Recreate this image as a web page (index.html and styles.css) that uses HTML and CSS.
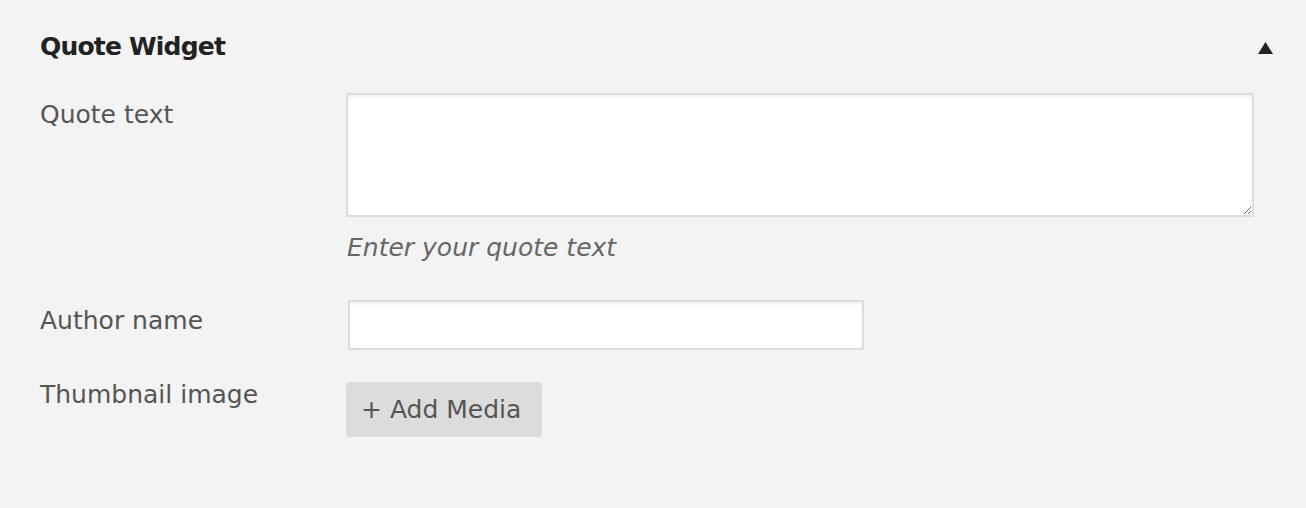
FILE: index.html
```html
<!DOCTYPE html>
<html lang="en">
<head>
<meta charset="utf-8">
<title>Quote Widget</title>
<link rel="stylesheet" href="styles.css">
</head>
<body>
<div class="widget">
  <div class="widget-header">
    <h3 class="widget-title">Quote Widget</h3>
    <svg class="toggle" width="15" height="12" viewBox="0 0 15 12" aria-hidden="true"><polygon points="7.5,0 15,12 0,12" fill="#222"/></svg>
  </div>
  <div class="row row-quote">
    <label class="label label-quote" for="quote">Quote text</label>
    <div class="control">
      <textarea id="quote" class="textarea"></textarea>
      <p class="hint">Enter your quote text</p>
    </div>
  </div>
  <div class="row row-author">
    <label class="label label-author" for="author">Author name</label>
    <div class="control">
      <input id="author" class="text-input" type="text">
    </div>
  </div>
  <div class="row row-thumb">
    <span class="label">Thumbnail image</span>
    <div class="control">
      <button class="media-btn" type="button">+ Add Media</button>
    </div>
  </div>
</div>
</body>
</html>
```
FILE: styles.css
```css
html, body {
  margin: 0;
  padding: 0;
  background: #f3f3f3;
}
body {
  font-family: "DejaVu Sans", "Liberation Sans", sans-serif;
  font-size: 25px;
  line-height: 30px;
  color: #555;
  width: 1306px;
  height: 508px;
  overflow: hidden;
}
.widget {
  padding: 29px 33px 0 40px;
}
.widget-header {
  display: flex;
  align-items: center;
  justify-content: space-between;
  height: 36px;
}
.widget-title {
  margin: 0;
  font-size: 25px;
  line-height: 36px;
  font-weight: bold;
  letter-spacing: -0.8px;
  color: #222;
}
.toggle {
  display: block;
  margin-top: 1px;
}
.row {
  display: flex;
  align-items: flex-start;
}
.label {
  width: 306px;
  flex: none;
}
.row-quote {
  margin-top: 28px;
}
.label-quote {
  padding-top: 7px;
}
.textarea {
  display: block;
  box-sizing: border-box;
  width: 908px;
  height: 124px;
  margin: 0;
  border: 2px solid #dddddd;
  background: #fff;
  box-shadow: inset 0 2px 3px rgba(0, 0, 0, 0.07);
  font: inherit;
  padding: 4px 8px;
  border-radius: 0;
  outline: none;
}
.hint {
  margin: 16px 0 0 1px;
  font-style: italic;
  color: #666;
}
.row-author {
  margin-top: 37px;
}
.label-author {
  padding-top: 6px;
}
.text-input {
  display: block;
  box-sizing: border-box;
  width: 516px;
  height: 50px;
  margin: 0 0 0 2px;
  border: 2px solid #dddddd;
  background: #fff;
  box-shadow: inset 0 2px 3px rgba(0, 0, 0, 0.07);
  font: inherit;
  padding: 0 8px;
  border-radius: 0;
  outline: none;
}
.row-thumb {
  margin-top: 30px;
}
.media-btn {
  display: block;
  margin: 2px 0 0 0;
  height: 55px;
  padding: 0 21px 0 15px;
  border: none;
  border-radius: 3px;
  background: #dcdcdc;
  color: #555;
  font-family: inherit;
  font-size: 25px;
  line-height: 30px;
  cursor: pointer;
}
```
